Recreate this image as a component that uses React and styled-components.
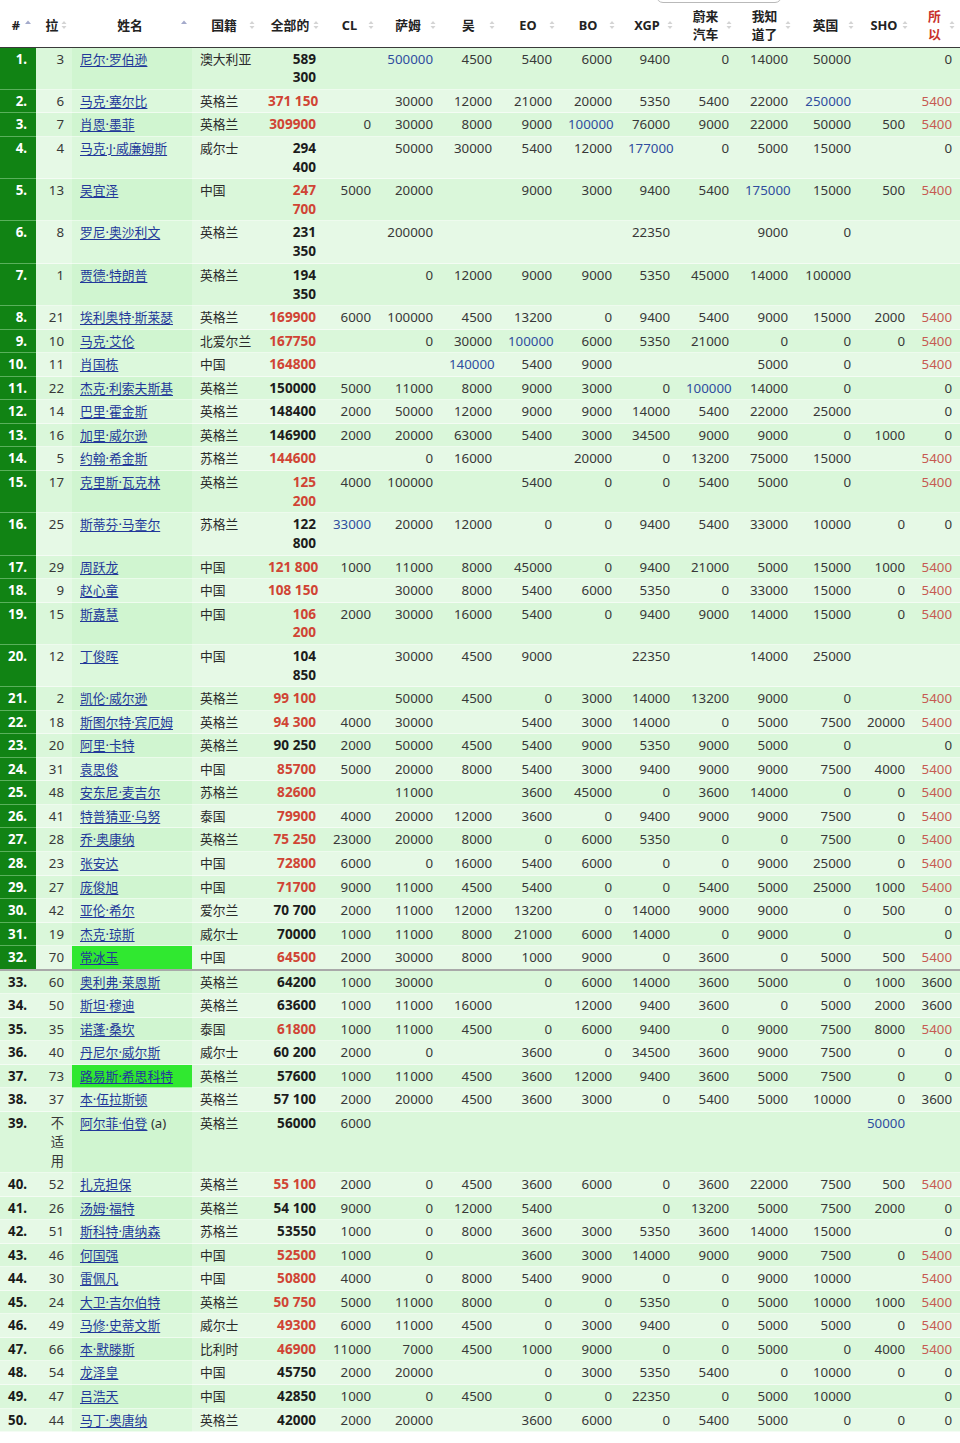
import React from 'react';
import styled, { createGlobalStyle } from 'styled-components';

const GlobalStyle = createGlobalStyle`
  html, body { margin: 0; padding: 0; background: #fff; }
  body { font-family: "Noto Sans", "Noto Sans CJK SC", sans-serif; }
`;

const Page = styled.div`
  position: relative;
  width: 960px;
  overflow: hidden;
`;

const TopTab = styled.div`
  position: absolute;
  top: -10px;
  left: 656px;
  width: 124px;
  height: 11px;
  border: 1px solid #b9b9b9;
  border-radius: 0 0 7px 7px;
  background: #fff;
`;

const Table = styled.table`
  width: 960px;
  table-layout: fixed;
  border-collapse: separate;
  border-spacing: 0;
  font-family: "Noto Sans", "Noto Sans CJK SC", sans-serif;
  font-size: 12.8px;
  color: #2a2a2a;
`;

const Th = styled.th`
  height: 47.5px;
  padding: 3px 4px 0 8px;
  border-bottom: 1px solid #3a3a3a;
  background: #fff;
  font-weight: 700;
  font-size: 12.8px;
  line-height: 18px;
  color: ${p => (p.$red ? '#c8322c' : '#222')};
  vertical-align: middle;
  box-sizing: border-box;
`;

const HeadInner = styled.div`
  display: flex;
  align-items: center;
`;

const HeadLabel = styled.span`
  flex: 1;
  text-align: center;
  white-space: nowrap;
`;

const Row = styled.tr`
  background: ${p => (p.$alt ? '#e6f9e6' : '#daf7da')};
`;

const cellBase = `
  padding: 2px 8px 1.8px 8px;
  line-height: 18.75px;
  vertical-align: top;
  overflow: visible;
`;

const RankCell = styled.td`
  ${cellBase}
  padding-right: 9px;
  text-align: right;
  font-weight: 700;
  font-size: 13.3px;
  color: ${p => (p.$top ? '#fff' : '#1a1a1a')};
  background: ${p => (p.$top ? '#118314' : 'transparent')};
  border-bottom: ${p => (p.$sep ? '2px solid #a9a9a9' : p.$top ? '1px solid rgba(180,230,180,0.45)' : '1px solid rgba(255,255,255,0.55)')};
  white-space: nowrap;
`;

const LaCell = styled.td`
  ${cellBase}
  text-align: right;
  font-size: 13.3px;
  color: #383838;
  border-bottom: ${p => (p.$sep ? '2px solid #a9a9a9' : '1px solid rgba(255,255,255,0.55)')};
`;

const NameCell = styled.td`
  ${cellBase}
  text-align: left;
  white-space: nowrap;
  background: ${p => (p.$hl ? '#30e830' : p.$alt ? '#dcf8dc' : '#d0f5d0')};
  border-bottom: ${p => (p.$sep ? '2px solid #a9a9a9' : '1px solid rgba(255,255,255,0.55)')};
`;

const NameLink = styled.a`
  color: #22389a;
  text-decoration: underline;
  text-underline-offset: 2px;
`;

const Note = styled.span`
  font-size: 13.3px;
  color: #333;
`;

const NatCell = styled.td`
  ${cellBase}
  text-align: left;
  white-space: nowrap;
  color: #2a2a2a;
  border-bottom: ${p => (p.$sep ? '2px solid #a9a9a9' : '1px solid rgba(255,255,255,0.55)')};
`;

const TotalCell = styled.td`
  ${cellBase}
  text-align: right;
  white-space: nowrap;
  font-weight: 700;
  font-size: 13.6px;
  color: ${p => (p.$red ? '#d04434' : '#1c1c1c')};
  border-bottom: ${p => (p.$sep ? '2px solid #a9a9a9' : '1px solid rgba(255,255,255,0.55)')};
`;

const NumCell = styled.td`
  ${cellBase}
  text-align: right;
  white-space: nowrap;
  font-size: 13.3px;
  color: ${p => (p.$tone === 'blue' ? '#2f4d9f' : p.$tone === 'red' ? '#c65a52' : '#383838')};
  border-bottom: ${p => (p.$sep ? '2px solid #a9a9a9' : '1px solid rgba(255,255,255,0.55)')};
`;

const SortIcon = ({ active }) => (
  <svg width="8" height="12" viewBox="0 0 8 12" style={{ flex: 'none' }}>
    {active ? (
      <polygon points="1,5 4,1.5 7,5" fill="#a4aacb" />
    ) : (
      <>
        <polygon points="1.5,5 4,2 6.5,5" fill="#d4d4d4" />
        <polygon points="1.5,7 4,10 6.5,7" fill="#d4d4d4" />
      </>
    )}
  </svg>
);

const widths = [36, 36, 120, 68, 64, 55, 62, 59, 60, 60, 58, 59, 59, 63, 54, 47];

const headers = [
  { l: '#', a: true },
  { l: '拉' },
  { l: '姓名', a: true },
  { l: '国籍' },
  { l: '全部的' },
  { l: 'CL' },
  { l: '萨姆' },
  { l: '吴' },
  { l: 'EO' },
  { l: 'BO' },
  { l: 'XGP' },
  { l: ['蔚来', '汽车'] },
  { l: ['我知', '道了'] },
  { l: '英国' },
  { l: 'SHO' },
  { l: ['所', '以'], red: true },
];

const rows = [
  ['3','尼尔·罗伯逊','澳大利亚','589/300','','*500000','4500','5400','6000','9400','0','14000','50000','','0'],
  ['6','马克·塞尔比','英格兰','!371 150','','30000','12000','21000','20000','5350','5400','22000','*250000','','5400'],
  ['7','肖恩·墨菲','英格兰','!309900','0','30000','8000','9000','*100000','76000','9000','22000','50000','500','5400'],
  ['4','马克·J·威廉姆斯','威尔士','294/400','','50000','30000','5400','12000','*177000','0','5000','15000','','0'],
  ['13','吴宜泽','中国','!247/700','5000','20000','','9000','3000','9400','5400','*175000','15000','500','5400'],
  ['8','罗尼·奥沙利文','英格兰','231/350','','200000','','','','22350','','9000','0','',''],
  ['1','贾德·特朗普','英格兰','194/350','','0','12000','9000','9000','5350','45000','14000','100000','',''],
  ['21','埃利奥特·斯莱瑟','英格兰','!169900','6000','100000','4500','13200','0','9400','5400','9000','15000','2000','5400'],
  ['10','马克·艾伦','北爱尔兰','!167750','','0','30000','*100000','6000','5350','21000','0','0','0','5400'],
  ['11','肖国栋','中国','!164800','','','*140000','5400','9000','','','5000','0','','5400'],
  ['22','杰克·利索夫斯基','英格兰','150000','5000','11000','8000','9000','3000','0','*100000','14000','0','','0'],
  ['14','巴里·霍金斯','英格兰','148400','2000','50000','12000','9000','9000','14000','5400','22000','25000','','0'],
  ['16','加里·威尔逊','英格兰','146900','2000','20000','63000','5400','3000','34500','9000','9000','0','1000','0'],
  ['5','约翰·希金斯','苏格兰','!144600','','0','16000','','20000','0','13200','75000','15000','','5400'],
  ['17','克里斯·瓦克林','英格兰','!125/200','4000','100000','','5400','0','0','5400','5000','0','','5400'],
  ['25','斯蒂芬·马奎尔','苏格兰','122/800','*33000','20000','12000','0','0','9400','5400','33000','10000','0','0'],
  ['29','周跃龙','中国','!121 800','1000','11000','8000','45000','0','9400','21000','5000','15000','1000','5400'],
  ['9','赵心童','中国','!108 150','','30000','8000','5400','6000','5350','0','33000','15000','0','5400'],
  ['15','斯嘉慧','中国','!106/200','2000','30000','16000','5400','0','9400','9000','14000','15000','0','5400'],
  ['12','丁俊晖','中国','104/850','','30000','4500','9000','','22350','','14000','25000','',''],
  ['2','凯伦·威尔逊','英格兰','!99 100','','50000','4500','0','3000','14000','13200','9000','0','','5400'],
  ['18','斯图尔特·宾厄姆','英格兰','!94 300','4000','30000','','5400','3000','14000','0','5000','7500','20000','5400'],
  ['20','阿里·卡特','英格兰','90 250','2000','50000','4500','5400','9000','5350','9000','5000','0','','0'],
  ['31','袁思俊','中国','!85700','5000','20000','8000','5400','3000','9400','9000','9000','7500','4000','5400'],
  ['48','安东尼·麦吉尔','苏格兰','!82600','','11000','','3600','45000','0','3600','14000','0','0','5400'],
  ['41','特普猜亚·乌努','泰国','!79900','4000','20000','12000','3600','0','9400','9000','9000','7500','0','5400'],
  ['28','乔·奥康纳','英格兰','!75 250','23000','20000','8000','0','6000','5350','0','0','7500','0','5400'],
  ['23','张安达','中国','!72800','6000','0','16000','5400','6000','0','0','9000','25000','0','5400'],
  ['27','庞俊旭','中国','!71700','9000','11000','4500','5400','0','0','5400','5000','25000','1000','5400'],
  ['42','亚伦·希尔','爱尔兰','70 700','2000','11000','12000','13200','0','14000','9000','9000','0','500','0'],
  ['19','杰克·琼斯','威尔士','70000','1000','11000','8000','21000','6000','14000','0','9000','0','','0'],
  ['70','#常冰玉','中国','!64500','2000','30000','8000','1000','9000','0','3600','0','5000','500','5400'],
  ['60','奥利弗·莱恩斯','英格兰','64200','1000','30000','','0','6000','14000','3600','5000','0','1000','3600'],
  ['50','斯坦·穆迪','英格兰','63600','1000','11000','16000','','12000','9400','3600','0','5000','2000','3600'],
  ['35','诺蓬·桑坎','泰国','!61800','1000','11000','4500','0','6000','9400','0','9000','7500','8000','5400'],
  ['40','丹尼尔·威尔斯','威尔士','60 200','2000','0','','3600','0','34500','3600','9000','7500','0','0'],
  ['73','#路易斯·希思科特','英格兰','57600','1000','11000','4500','3600','12000','9400','3600','5000','7500','0','0'],
  ['37','本·伍拉斯顿','英格兰','57 100','2000','20000','4500','3600','3000','0','5400','5000','10000','0','3600'],
  ['不适用','阿尔菲·伯登','英格兰','56000','6000','','','','','','','','','*50000',''],
  ['52','扎克担保','英格兰','!55 100','2000','0','4500','3600','6000','0','3600','22000','7500','500','5400'],
  ['26','汤姆·福特','英格兰','54 100','9000','0','12000','5400','','0','13200','5000','7500','2000','0'],
  ['51','斯科特·唐纳森','苏格兰','53550','1000','0','8000','3600','3000','5350','3600','14000','15000','','0'],
  ['46','何国强','中国','!52500','1000','0','','3600','3000','14000','9000','9000','7500','0','5400'],
  ['30','雷佩凡','中国','!50800','4000','0','8000','5400','9000','0','0','9000','10000','','5400'],
  ['24','大卫·吉尔伯特','英格兰','!50 750','5000','11000','8000','0','0','5350','0','5000','10000','1000','5400'],
  ['49','马修·史蒂文斯','威尔士','!49300','6000','11000','4500','0','3000','9400','0','5000','5000','0','5400'],
  ['66','本·默滕斯','比利时','!46900','11000','7000','4500','1000','9000','0','0','5000','0','4000','5400'],
  ['54','龙泽皇','中国','45750','2000','20000','','0','3000','5350','5400','0','10000','0','0'],
  ['47','吕浩天','中国','42850','1000','0','4500','0','0','22350','0','5000','10000','','0'],
  ['44','马丁·奥唐纳','英格兰','42000','2000','20000','','3600','6000','0','5400','5000','0','0','0'],
];

const Lines = ({ parts }) =>
  parts.map((p, i) => (
    <React.Fragment key={i}>
      {i > 0 && <br />}
      {p}
    </React.Fragment>
  ));

export default function App() {
  return (
    <Page>
      <GlobalStyle />
      <Table>
        <colgroup>
          {widths.map((w, i) => (
            <col key={i} style={{ width: w }} />
          ))}
        </colgroup>
        <thead>
          <tr>
            {headers.map((h, i) => (
              <Th key={i} $red={h.red}>
                <HeadInner>
                  <HeadLabel>{Array.isArray(h.l) ? <Lines parts={h.l} /> : h.l}</HeadLabel>
                  <SortIcon active={h.a} />
                </HeadInner>
              </Th>
            ))}
          </tr>
        </thead>
        <tbody>
          {rows.map((r, idx) => {
            const rank = idx + 1;
            const top = rank <= 32;
            const sep = rank === 32;
            const alt = idx % 2 === 1;
            const [la, rawName, nat, rawTotal, ...vals] = r;
            const hl = rawName.startsWith('#');
            const name = hl ? rawName.slice(1) : rawName;
            const red = rawTotal.startsWith('!');
            const total = (red ? rawTotal.slice(1) : rawTotal).split('/');
            return (
              <Row key={idx} $alt={alt}>
                <RankCell $top={top} $sep={sep}>{rank}.</RankCell>
                <LaCell $sep={sep}>{la}</LaCell>
                <NameCell $hl={hl} $alt={alt} $sep={sep}>
                  <NameLink href="#">{name}</NameLink>
                  {rank === 39 && <Note>&nbsp;(a)</Note>}
                </NameCell>
                <NatCell $sep={sep}>{nat}</NatCell>
                <TotalCell $red={red} $sep={sep}>
                  <Lines parts={total} />
                </TotalCell>
                {vals.map((v, j) => {
                  const blue = v.startsWith('*');
                  const text = blue ? v.slice(1) : v;
                  const tone = blue ? 'blue' : j === 10 && text === '5400' ? 'red' : 'plain';
                  return (
                    <NumCell key={j} $tone={tone} $sep={sep}>
                      {text}
                    </NumCell>
                  );
                })}
              </Row>
            );
          })}
        </tbody>
      </Table>
      <TopTab />
    </Page>
  );
}
